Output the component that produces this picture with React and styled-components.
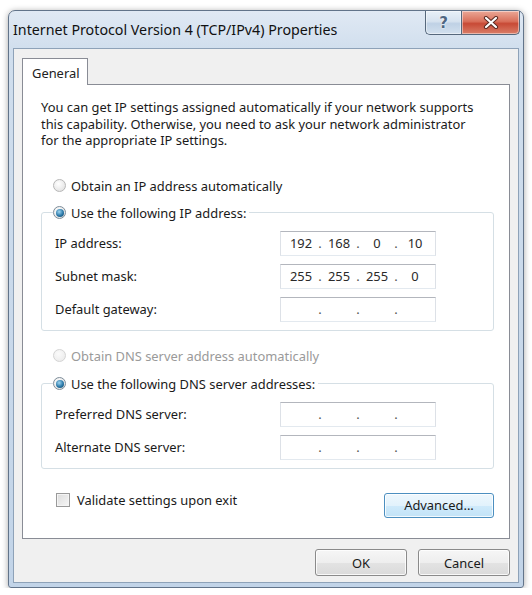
import React from "react";
import styled, { createGlobalStyle } from "styled-components";

const GlobalStyle = createGlobalStyle`
  html, body {
    margin: 0;
    padding: 0;
    background: #ffffff;
  }
  body {
    font-family: "Noto Sans", "Open Sans", sans-serif;
    font-size: 12.9px;
    color: #1a1a1a;
  }
  * {
    box-sizing: border-box;
  }
`;

const Window = styled.div`
  margin: 10px 0 0 8px;
  width: 516px;
  height: 578px;
  display: flex;
  flex-direction: column;
  padding: 0 4px 4px 4px;
  border: 1px solid #62748a;
  border-radius: 7px 7px 3px 3px;
  background: linear-gradient(180deg, #e0e9f4 0%, #d0deed 40px, #c2d4e8 100%);
  box-shadow: 0 1px 6px rgba(0, 0, 0, 0.35);
`;

const TitleBar = styled.div`
  height: 37px;
  display: flex;
  align-items: center;
`;

const Title = styled.span`
  flex: 1;
  font-size: 14.25px;
  color: #111;
  white-space: nowrap;
`;

const CaptionButtons = styled.div`
  align-self: flex-start;
  display: flex;
  margin-right: -1px;
`;

const CaptionButton = styled.div`
  width: ${(p) => p.$w}px;
  height: 24px;
  display: flex;
  align-items: center;
  justify-content: center;
  border: 1px solid #56687c;
  border-top: none;
  background: ${(p) =>
    p.$close
      ? "linear-gradient(180deg, #eba897 0%, #d9705b 45%, #c84a36 55%, #da7e68 100%)"
      : "linear-gradient(180deg, #e8f0f8 0%, #d6e2ef 45%, #bfd1e5 55%, #d2e0ee 100%)"};
  box-shadow: inset 0 0 0 1px rgba(255, 255, 255, 0.45);

  &:first-child {
    border-right: none;
    border-radius: 0 0 0 5px;
  }
  &:last-child {
    border-radius: 0 0 5px 0;
  }
`;

const HelpGlyph = styled.span`
  font-family: "DejaVu Sans", sans-serif;
  font-weight: bold;
  font-size: 15px;
  color: #4f6783;
  text-shadow: 0 0 2px #fff, 0 0 1px #fff;
`;

const Client = styled.div`
  flex: 1;
  display: flex;
  flex-direction: column;
  background: #f0f0f0;
  border: 1px solid #8ea2b8;
  padding: 9px 8px 6px 8px;
`;

const TabStrip = styled.div`
  display: flex;
`;

const Tab = styled.div`
  width: 66px;
  height: 27px;
  margin-bottom: -1px;
  padding: 5px 0 0 9px;
  background: #ffffff;
  border: 1px solid #898c95;
  border-bottom: none;
  position: relative;
  z-index: 1;
  color: #222;
`;

const Panel = styled.div`
  flex: 1;
  display: flex;
  flex-direction: column;
  background: #ffffff;
  border: 1px solid #898c95;
  padding: 14px 15px 0 18px;
`;

const Intro = styled.p`
  margin: 0;
  line-height: 16.5px;
  white-space: nowrap;
`;

const OptionRow = styled.label`
  display: flex;
  align-items: center;
  gap: 5px;
  height: 18px;
  margin-top: ${(p) => p.$top || 0}px;
  padding-left: 12px;
  color: ${(p) => (p.$disabled ? "#9a9a9a" : "#1a1a1a")};
  white-space: nowrap;
`;

const Radio = styled.span`
  width: 13px;
  height: 13px;
  border-radius: 50%;
  flex: none;
  display: flex;
  align-items: center;
  justify-content: center;
  border: 1px solid ${(p) => (p.$checked ? "#7d8c99" : p.$disabled ? "#d4d4d4" : "#b7b7b7")};
  background: ${(p) =>
    p.$disabled
      ? "radial-gradient(circle at 40% 35%, #fbfbfb, #e8e8e8)"
      : "radial-gradient(circle at 40% 35%, #ffffff, #dcdcdc)"};

  &::after {
    content: "";
    display: ${(p) => (p.$checked ? "block" : "none")};
    width: 8px;
    height: 8px;
    border-radius: 50%;
    background: radial-gradient(circle at 40% 35%, #9fd6f2 0%, #2a78a8 55%, #13435f 100%);
  }
`;

const GroupBox = styled.fieldset`
  margin: ${(p) => p.$top || 9}px 0 0 0;
  padding: 0 0 8px 13px;
  border: 1px solid #d5dfe5;
  border-radius: 3px;
  min-width: 0;
`;

const Legend = styled.legend`
  display: flex;
  align-items: center;
  gap: 5px;
  height: 18px;
  margin-left: -2px;
  padding: 0 3px 0 0;
  white-space: nowrap;
`;

const FieldGrid = styled.div`
  display: grid;
  grid-template-columns: 225px 156px;
  row-gap: 8px;
  align-items: center;
  margin-top: 9px;
`;

const FieldLabel = styled.span`
  white-space: nowrap;
`;

const IpBox = styled.div`
  height: 25px;
  display: grid;
  grid-template-columns: 30px 8px 30px 8px 30px 8px 30px;
  align-items: center;
  padding-left: 5px;
  background: #ffffff;
  border: 1px solid;
  border-color: #b3b6bd #dde1e7 #e3e9ef #dde1e7;
  color: #2a2a2a;
`;

const Octet = styled.span`
  text-align: center;
`;

const Dot = styled.span`
  text-align: center;
  color: #555;
`;

const Footer = styled.div`
  display: flex;
  justify-content: space-between;
  align-items: flex-start;
  margin-top: 24px;
`;

const CheckRow = styled.label`
  display: flex;
  align-items: center;
  gap: 7px;
  padding-left: 15px;
  margin-top: -1px;
  height: 16px;
  white-space: nowrap;
`;

const CheckBox = styled.span`
  width: 14px;
  height: 14px;
  flex: none;
  border: 1px solid #9a9a9a;
  background: linear-gradient(135deg, #dcdcdc, #f6f6f6);
  box-shadow: inset 0 0 0 1px #f4f4f4;
`;

const Button = styled.div`
  width: ${(p) => p.$w}px;
  height: ${(p) => p.$h}px;
  display: flex;
  align-items: center;
  justify-content: center;
  border-radius: 3px;
  border: 1px solid ${(p) => (p.$hot ? "#4c8fc0" : "#8a8a8a")};
  background: ${(p) =>
    p.$hot
      ? "linear-gradient(180deg, #eef7fd 0%, #e2f2fc 50%, #cfeafb 51%, #c2e3f7 100%)"
      : "linear-gradient(180deg, #f6f6f6 0%, #eeeeee 50%, #e3e3e3 51%, #dadada 100%)"};
  box-shadow: inset 0 0 0 1px rgba(255, 255, 255, 0.8);
  color: #1a1a1a;
`;

const ButtonRow = styled.div`
  display: flex;
  justify-content: flex-end;
  gap: 11px;
  margin-top: 10px;
`;

const IpField = ({ value }) => {
  const parts = value ? value.split(".") : ["", "", "", ""];
  return (
    <IpBox>
      {parts.map((p, i) => (
        <React.Fragment key={i}>
          <Octet>{p}</Octet>
          {i < 3 && <Dot>.</Dot>}
        </React.Fragment>
      ))}
    </IpBox>
  );
};

export default function App() {
  return (
    <>
      <GlobalStyle />
      <Window>
        <TitleBar>
          <Title>Internet Protocol Version 4 (TCP/IPv4) Properties</Title>
          <CaptionButtons>
            <CaptionButton $w={36}>
              <HelpGlyph>?</HelpGlyph>
            </CaptionButton>
            <CaptionButton $w={59} $close>
              <svg width="16" height="13" viewBox="0 0 16 13">
                <path d="M3 2 L13 11 M13 2 L3 11" stroke="#5a2a22" strokeWidth="4.2" strokeLinecap="round" />
                <path d="M3 2 L13 11 M13 2 L3 11" stroke="#ffffff" strokeWidth="2.2" strokeLinecap="round" />
              </svg>
            </CaptionButton>
          </CaptionButtons>
        </TitleBar>

        <Client>
          <TabStrip>
            <Tab>General</Tab>
          </TabStrip>
          <Panel>
            <Intro>
              You can get IP settings assigned automatically if your network supports
              <br />
              this capability. Otherwise, you need to ask your network administrator
              <br />
              for the appropriate IP settings.
            </Intro>

            <OptionRow $top={28}>
              <Radio />
              Obtain an IP address automatically
            </OptionRow>
            <GroupBox>
              <Legend>
                <Radio $checked />
                Use the following IP address:
              </Legend>
              <FieldGrid>
                <FieldLabel>IP address:</FieldLabel>
                <IpField value="192.168.0.10" />
                <FieldLabel>Subnet mask:</FieldLabel>
                <IpField value="255.255.255.0" />
                <FieldLabel>Default gateway:</FieldLabel>
                <IpField />
              </FieldGrid>
            </GroupBox>

            <OptionRow $top={16} $disabled>
              <Radio $disabled />
              Obtain DNS server address automatically
            </OptionRow>
            <GroupBox $top={10}>
              <Legend>
                <Radio $checked />
                Use the following DNS server addresses:
              </Legend>
              <FieldGrid>
                <FieldLabel>Preferred DNS server:</FieldLabel>
                <IpField />
                <FieldLabel>Alternate DNS server:</FieldLabel>
                <IpField />
              </FieldGrid>
            </GroupBox>

            <Footer>
              <CheckRow>
                <CheckBox />
                Validate settings upon exit
              </CheckRow>
              <Button $w={110} $h={25} $hot>
                Advanced...
              </Button>
            </Footer>
          </Panel>
          <ButtonRow>
            <Button $w={92} $h={27}>OK</Button>
            <Button $w={92} $h={27}>Cancel</Button>
          </ButtonRow>
        </Client>
      </Window>
    </>
  );
}
